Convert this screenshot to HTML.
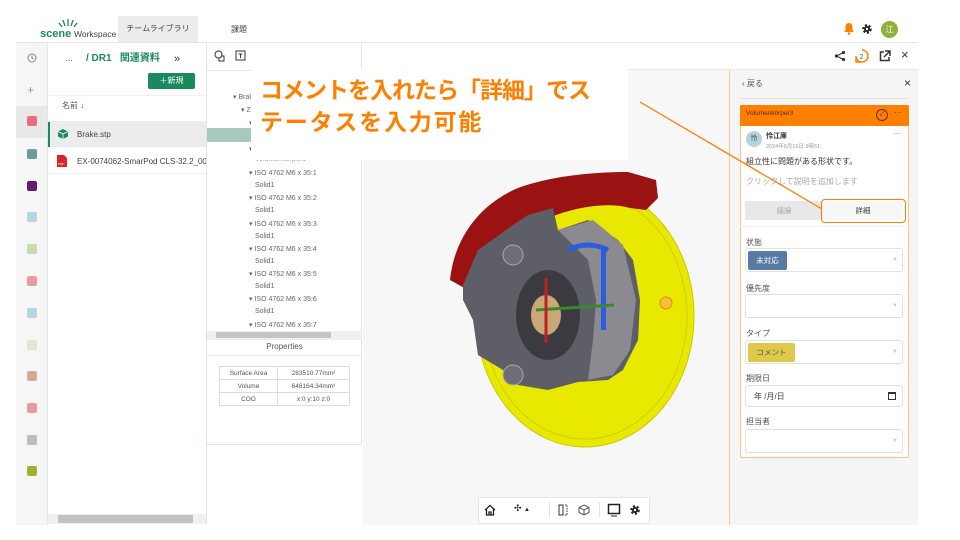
<!DOCTYPE html>
<html><head><meta charset="utf-8"><style>
*{box-sizing:border-box;margin:0;padding:0}
body{width:960px;height:540px;overflow:hidden;background:#fff;font-family:"Liberation Sans","Noto Sans CJK JP",sans-serif;color:#333;position:relative}
.a{position:absolute}
.sq{position:absolute;left:27px;width:10px;height:10px;border-radius:2px}
.t{font-size:7px;color:#666;position:absolute;white-space:nowrap}
.lbl{position:absolute;left:746px;font-size:8px;color:#555}
.fld{position:absolute;left:745px;width:158px;height:24px;border:1px solid #dde3e3;border-radius:3px;background:#fff}
.fld .ar{position:absolute;right:4px;top:8px;font-size:6px;color:#ccc}
</style></head><body>
<!-- header -->
<div class="a" style="left:16px;top:42px;width:902px;height:1px;background:#dfe7e6"></div>
<svg class="a" style="left:56px;top:16px" width="24" height="12"><g stroke="#1a8a5e" stroke-width="1.3"><line x1="12" y1="3" x2="12" y2="10"/><line x1="7" y1="4" x2="9" y2="10"/><line x1="17" y1="4" x2="15" y2="10"/><line x1="3" y1="7" x2="6" y2="11"/><line x1="21" y1="7" x2="18" y2="11"/></g></svg>
<div class="a" style="left:40px;top:28px;font-size:10px;white-space:nowrap"><b style="color:#1a8a5e;font-size:11px">scene</b> <span style="color:#444;font-size:8.5px">Workspace</span></div>
<div class="a" style="left:118px;top:16px;width:80px;height:26px;background:#ececec;font-size:8px;color:#444;text-align:center;line-height:26px">チームライブラリ</div>
<div class="a" style="left:231px;top:24px;font-size:8px;color:#444">課題</div>
<svg class="a" style="left:843px;top:22px" width="12" height="13"><path d="M6 1C3.5 1 2.5 3 2.5 5v3L1 10h10L9.5 8V5C9.5 3 8.5 1 6 1z" fill="#ff7f00"/><circle cx="6" cy="11.5" r="1.3" fill="#ff7f00"/></svg>
<svg class="a" style="left:861px;top:23px" width="12" height="12"><circle cx="6" cy="6" r="3.5" fill="none" stroke="#222" stroke-width="2.5" stroke-dasharray="2 1.6"/><circle cx="6" cy="6" r="3" fill="#222"/><circle cx="6" cy="6" r="1.2" fill="#fff"/></svg>
<div class="a" style="left:881px;top:21px;width:17px;height:17px;border-radius:50%;background:#8fb03a;color:#fff;font-size:8px;text-align:center;line-height:17px">江</div>
<!-- left icon column -->
<div class="a" style="left:16px;top:43px;width:32px;height:482px;background:#f6f6f6"></div>
<svg class="a" style="left:27px;top:53px" width="10" height="10"><circle cx="5" cy="5" r="4" fill="none" stroke="#888" stroke-width="1"/><path d="M5 2.5V5l1.6 1.2" fill="none" stroke="#888" stroke-width="1"/></svg>
<div class="a" style="left:27px;top:83px;font-size:12px;color:#999">+</div>
<div class="a" style="left:16px;top:106px;width:32px;height:32px;background:#e8e8e8"></div>
<div class="sq" style="top:116px;background:#ef6a7e"></div>
<div class="sq" style="top:149px;background:#6f9c9a"></div>
<div class="sq" style="top:181px;background:#641a6e"></div>
<div class="sq" style="top:212px;background:#b8d4e0"></div>
<div class="sq" style="top:244px;background:#c8dab0"></div>
<div class="sq" style="top:276px;background:#ec9aa2"></div>
<div class="sq" style="top:308px;background:#b8d4e0"></div>
<div class="sq" style="top:340px;background:#dde9d0"></div>
<div class="sq" style="top:371px;background:#d4a89a"></div>
<div class="sq" style="top:403px;background:#ec9aa2"></div>
<div class="sq" style="top:435px;background:#b8bfc3"></div>
<div class="sq" style="top:466px;background:#a4b030"></div>
<!-- file panel -->
<div class="a" style="left:47px;top:43px;width:1px;height:482px;background:#dfe7e6"></div>
<div class="a" style="left:206px;top:43px;width:1px;height:482px;background:#dfe7e6"></div>
<div class="a" style="left:65px;top:54px;font-size:8px;color:#333">…</div>
<div class="a" style="left:86px;top:49px;font-size:10px;font-weight:bold;color:#1a8a5e;white-space:nowrap">/ DR1 &nbsp; 関連資料</div>
<div class="a" style="left:174px;top:53px;font-size:11px;color:#333">»</div>
<div class="a" style="left:148px;top:73px;width:47px;height:16px;background:#1a8a5e;border-radius:2px;color:#fff;font-size:8px;text-align:center;line-height:16px">＋新規</div>
<div class="a" style="left:48px;top:95px;width:158px;height:1px;background:#f0f0f0"></div>
<div class="a" style="left:62px;top:100px;font-size:8px;color:#555">名前 ↓</div>
<div class="a" style="left:48px;top:121px;width:158px;height:1px;background:#eee"></div>
<div class="a" style="left:48px;top:122px;width:158px;height:25px;background:#ececec;border-left:2px solid #1a8a5e"></div>
<svg class="a" style="left:57px;top:128px" width="12" height="12"><path d="M6 1l5 2.5v5L6 11 1 8.5v-5z" fill="#1a8a5e"/><path d="M1 3.5L6 6l5-2.5M6 6v5" stroke="#fff" stroke-width="0.8" fill="none"/></svg>
<div class="a" style="left:77px;top:130px;font-size:8px;color:#444">Brake.stp</div>
<svg class="a" style="left:57px;top:155px" width="10" height="12"><path d="M0 0h7l3 3v9H0z" fill="#d9262c"/><text x="1" y="10" font-size="3" fill="#fff" font-family="Liberation Sans">PDF</text></svg>
<div class="a" style="left:77px;top:157px;font-size:8px;color:#444;white-space:nowrap;width:129px;overflow:hidden">EX-0074062-SmarPod CLS-32.2_000.pdf</div>
<div class="a" style="left:48px;top:173px;width:158px;height:1px;background:#eee"></div>
<div class="a" style="left:48px;top:514px;width:158px;height:10px;background:#f0f0f0"></div>
<div class="a" style="left:58px;top:515px;width:135px;height:8px;background:#c2c2c2"></div>
<!-- tree panel -->
<div class="a" style="left:207px;top:43px;width:155px;height:402px;background:#fff;border-right:1px solid #dfe7e6;border-bottom:1px solid #dfe7e6"></div>
<svg class="a" style="left:214px;top:50px" width="12" height="12"><circle cx="4.5" cy="4.5" r="3.5" fill="none" stroke="#333"/><path d="M7 6h3v5H5V8.5" fill="none" stroke="#333"/></svg>
<svg class="a" style="left:235px;top:50px" width="11" height="11"><rect x="1" y="1" width="9" height="9" fill="none" stroke="#333"/><path d="M3.5 4h4M5.5 4v4" stroke="#333"/></svg>
<div class="a" style="left:207px;top:70px;width:155px;height:1px;background:#e6e6e6"></div>
<div class="a" style="left:207px;top:128px;width:50px;height:14px;background:#a8c9bd"></div>
<div class="t" style="left:233px;top:93px">▾ Brake</div>
<div class="t" style="left:241px;top:106px">▾ Zu</div>
<div class="t" style="left:249px;top:119px">▾</div>
<div class="t" style="left:249px;top:145px">▾</div>
<div class="t" style="left:255px;top:156px;color:#999">Volumenkörper1</div>
<div class="t" style="left:249px;top:169px">▾ ISO 4762 M6 x 35:1</div><div class="t" style="left:255px;top:182px">Solid1</div>
<div class="t" style="left:249px;top:194px">▾ ISO 4762 M6 x 35:2</div><div class="t" style="left:255px;top:207px">Solid1</div>
<div class="t" style="left:249px;top:220px">▾ ISO 4762 M6 x 35:3</div><div class="t" style="left:255px;top:233px">Solid1</div>
<div class="t" style="left:249px;top:245px">▾ ISO 4762 M6 x 35:4</div><div class="t" style="left:255px;top:258px">Solid1</div>
<div class="t" style="left:249px;top:270px">▾ ISO 4762 M6 x 35:5</div><div class="t" style="left:255px;top:283px">Solid1</div>
<div class="t" style="left:249px;top:295px">▾ ISO 4762 M6 x 35:6</div><div class="t" style="left:255px;top:308px">Solid1</div>
<div class="t" style="left:249px;top:321px">▾ ISO 4762 M6 x 35:7</div>
<div class="a" style="left:207px;top:331px;width:155px;height:8px;background:#f0f0f0"></div>
<div class="a" style="left:216px;top:332px;width:115px;height:6px;background:#c4c4c4"></div>
<div class="a" style="left:207px;top:339px;width:155px;height:1px;background:#eee"></div>
<div class="a" style="left:207px;top:342px;width:155px;text-align:center;font-size:8px;color:#555">Properties</div>
<div class="a" style="left:207px;top:355px;width:155px;height:1px;background:#eee"></div>
<table class="a" style="left:219px;top:366px;width:131px;border-collapse:collapse;font-size:6.5px;color:#555;text-align:center">
<tr><td style="border:1px solid #ddd;height:13px;width:58px">Surface Area</td><td style="border:1px solid #ddd">283510.77mm²</td></tr>
<tr><td style="border:1px solid #ddd;height:13px">Volume</td><td style="border:1px solid #ddd">646164.34mm³</td></tr>
<tr><td style="border:1px solid #ddd;height:13px">COG</td><td style="border:1px solid #ddd">x:0 y:10 z:0</td></tr></table>
<!-- viewer -->
<div class="a" style="left:363px;top:70px;width:366px;height:455px;background:#f7f7f7"></div>
<div class="a" style="left:363px;top:43px;width:555px;height:27px;background:#fff;border-bottom:1px solid #e8e8e8"></div>
<svg class="a" style="left:418px;top:150px" width="300" height="300">
<ellipse cx="167" cy="166" rx="109" ry="131" fill="#e8e800" stroke="#c8c800"/>
<ellipse cx="167" cy="166" rx="102" ry="123" fill="none" stroke="#d0d000" stroke-width="1"/>
<path d="M32 130C36 90 60 55 100 38 130 27 170 22 210 22L238 30 240 48 228 60 212 58C190 52 160 56 130 68 100 82 75 105 60 130L50 140z" fill="#9a1212"/>
<path d="M45 135L60 100 95 75 110 65 135 58 140 80 170 70 200 90 215 110 222 150 220 190 205 220 190 230 160 232 130 240 100 235 85 220 60 205 55 170 45 150z" fill="#5e5e66"/>
<path d="M140 80L175 70 205 95 218 150 212 200 195 225 170 230 175 190 178 150 170 110z" fill="#8a8a90"/>
<ellipse cx="130" cy="165" rx="32" ry="45" fill="#3a3a40"/>
<ellipse cx="128" cy="165" rx="15" ry="20" fill="#c8a878"/>
<path d="M183 100h5v80h-5z" fill="#2a5ce0"/><path d="M150 100q20-10 40 0" stroke="#2a5ce0" stroke-width="5" fill="none"/>
<path d="M118 160l78-5" stroke="#3a8a2a" stroke-width="3"/><path d="M128 128v65" stroke="#c02020" stroke-width="3"/>
<circle cx="95" cy="105" r="10" fill="#6e6e76" stroke="#aaa"/><circle cx="95" cy="225" r="10" fill="#6e6e76" stroke="#aaa"/>
<circle cx="248" cy="153" r="6" fill="#f0c040" stroke="#f08a00"/>
</svg>
<!-- callout -->
<div class="a" style="left:251px;top:69px;width:377px;height:91px;background:#fff"></div>
<div class="a" style="left:260px;top:74px;font-size:23px;line-height:32px;font-weight:bold;color:#ff7f00;white-space:nowrap;letter-spacing:-1px">コメントを入れたら「詳細」でス<br><span style="letter-spacing:1.8px">テータスを入力可能</span></div>
<!-- right header icons -->
<svg class="a" style="left:834px;top:50px" width="12" height="12"><circle cx="9.5" cy="2.5" r="1.6" fill="#333"/><circle cx="2.5" cy="6" r="1.6" fill="#333"/><circle cx="9.5" cy="9.5" r="1.6" fill="#333"/><path d="M9.5 2.5L2.5 6l7 3.5" stroke="#333" fill="none"/></svg>
<svg class="a" style="left:855px;top:49px" width="14" height="14"><path d="M7 1a6 6 0 1 1-6 6v6h6" fill="none" stroke="#ff7f00" stroke-width="1.4"/><text x="4.5" y="10" font-size="7" fill="#555" font-family="Liberation Sans">2</text></svg>
<svg class="a" style="left:879px;top:50px" width="12" height="12"><path d="M5 2H1.5v8.5H10V7" fill="none" stroke="#333" stroke-width="1.5"/><path d="M6 1h5v5M11 1L5 7" fill="none" stroke="#333" stroke-width="1.5"/></svg>
<div class="a" style="left:901px;top:47px;font-size:13px;color:#333">×</div>
<!-- right panel -->
<div class="a" style="left:729px;top:70px;width:189px;height:455px;background:#f5f5f5;border-left:1px solid #f8c89a"></div>
<div class="a" style="left:742px;top:78px;font-size:8px;color:#555">‹ 戻る</div>
<div class="a" style="left:904px;top:76px;font-size:12px;color:#333">×</div>
<div class="a" style="left:740px;top:98px;width:168px;height:1px;background:#e2e2e2"></div>
<div class="a" style="left:740px;top:105px;width:169px;height:353px;background:#fff;border:1px solid #ffc28a;border-radius:2px"></div>
<div class="a" style="left:740px;top:105px;width:169px;height:21px;background:#ff7f00;border-radius:2px 2px 0 0"></div>
<div class="a" style="left:746px;top:110px;font-size:6.5px;color:#5a2a00">Volumenkörper3</div>
<div class="a" style="left:876px;top:109px;width:12px;height:12px;border:1px solid #6a3000;border-radius:50%;font-size:7px;text-align:center;line-height:10px;color:#6a3000">✓</div>
<div class="a" style="left:894px;top:108px;font-size:8px;color:#6a3000">···</div>
<div class="a" style="left:746px;top:131px;width:16px;height:16px;border-radius:50%;background:#b4d4dc;font-size:7px;text-align:center;line-height:16px;color:#555">怜</div>
<div class="a" style="left:766px;top:131px;font-size:7px;color:#333;font-weight:bold">怜江庫</div>
<div class="a" style="left:766px;top:142px;font-size:5.5px;color:#999">2024年6月16日 9時51</div>
<div class="a" style="left:893px;top:129px;font-size:8px;color:#888">···</div>
<div class="a" style="left:746px;top:156px;font-size:8px;color:#333">組立性に問題がある形状です。</div>
<div class="a" style="left:746px;top:176px;font-size:8px;color:#aaa">クリックして説明を追加します</div>
<div class="a" style="left:745px;top:201px;width:78px;height:19px;background:#e8e8e8;border-radius:2px;font-size:7.5px;color:#aaa;text-align:center;line-height:19px">議論</div>
<div class="a" style="left:823px;top:201px;width:80px;height:19px;background:#f7f7f7;border-radius:2px;font-size:7.5px;color:#444;text-align:center;line-height:19px">詳細</div>
<div class="a" style="left:821px;top:199px;width:85px;height:24px;border:1.5px solid #ff7f00;border-radius:4px"></div>
<div class="a" style="left:740px;top:226px;width:169px;height:1px;background:#eee"></div>
<div class="lbl" style="top:237px">状態</div>
<div class="fld" style="top:248px"><div class="a" style="left:2px;top:2px;width:39px;height:19px;background:#5a7aa6;border-radius:2px;color:#fff;font-size:7.5px;text-align:center;line-height:19px">未対応</div><span class="ar">▼</span></div>
<div class="lbl" style="top:283px">優先度</div>
<div class="fld" style="top:294px"><span class="ar">▼</span></div>
<div class="lbl" style="top:328px">タイプ</div>
<div class="fld" style="top:340px"><div class="a" style="left:2px;top:2px;width:47px;height:19px;background:#e0c94a;border-radius:2px;color:#555;font-size:7.5px;text-align:center;line-height:19px">コメント</div><span class="ar">▼</span></div>
<div class="lbl" style="top:373px">期限日</div>
<div class="fld" style="top:385px;height:22px"><span class="a" style="left:8px;top:5px;font-size:8px;color:#444">年 /月/日</span><span class="a" style="right:6px;top:6px;width:8px;height:8px;border:1.5px solid #333;border-top-width:2.5px"></span></div>
<div class="lbl" style="top:416px">担当者</div>
<div class="fld" style="top:429px"><span class="ar">▼</span></div>
<!-- arrow line -->
<svg class="a" style="left:0;top:0" width="960" height="540"><line x1="640" y1="102" x2="822" y2="209" stroke="#ff7f00" stroke-width="1.3"/></svg>
<!-- bottom toolbar -->
<div class="a" style="left:478px;top:497px;width:172px;height:27px;background:#fff;border:1px solid #e4e4e4;border-radius:2px"></div>
<svg class="a" style="left:484px;top:504px" width="12" height="12"><path d="M1 6L6 1.5 11 6M2.5 5v6h7V5M5 11V8h2v3" fill="none" stroke="#222" stroke-width="1.3"/></svg>
<div class="a" style="left:514px;top:503px;font-size:9px;color:#222">✣ <span style="font-size:6px">▲</span></div>
<div class="a" style="left:549px;top:502px;width:1px;height:16px;background:#e4e4e4"></div>
<svg class="a" style="left:558px;top:504px" width="10" height="12"><rect x="1" y="1" width="4" height="10" fill="none" stroke="#333"/><path d="M7 1h2v10H7" fill="none" stroke="#333" stroke-dasharray="1.5 1"/></svg>
<svg class="a" style="left:578px;top:504px" width="12" height="12"><path d="M6 1l5 2.5v5L6 11 1 8.5v-5zM1 3.5L6 6l5-2.5M6 6v5" fill="none" stroke="#555"/></svg>
<div class="a" style="left:599px;top:502px;width:1px;height:16px;background:#e4e4e4"></div>
<svg class="a" style="left:607px;top:503px" width="14" height="14"><rect x="1.5" y="1.5" width="11" height="9" fill="none" stroke="#222" stroke-width="1.5"/><path d="M4 13h6" stroke="#222"/></svg>
<svg class="a" style="left:629px;top:504px" width="12" height="12"><circle cx="6" cy="6" r="3.5" fill="none" stroke="#222" stroke-width="2.5" stroke-dasharray="2 1.6"/><circle cx="6" cy="6" r="3" fill="#222"/><circle cx="6" cy="6" r="1.2" fill="#fff"/></svg>
</body></html>
